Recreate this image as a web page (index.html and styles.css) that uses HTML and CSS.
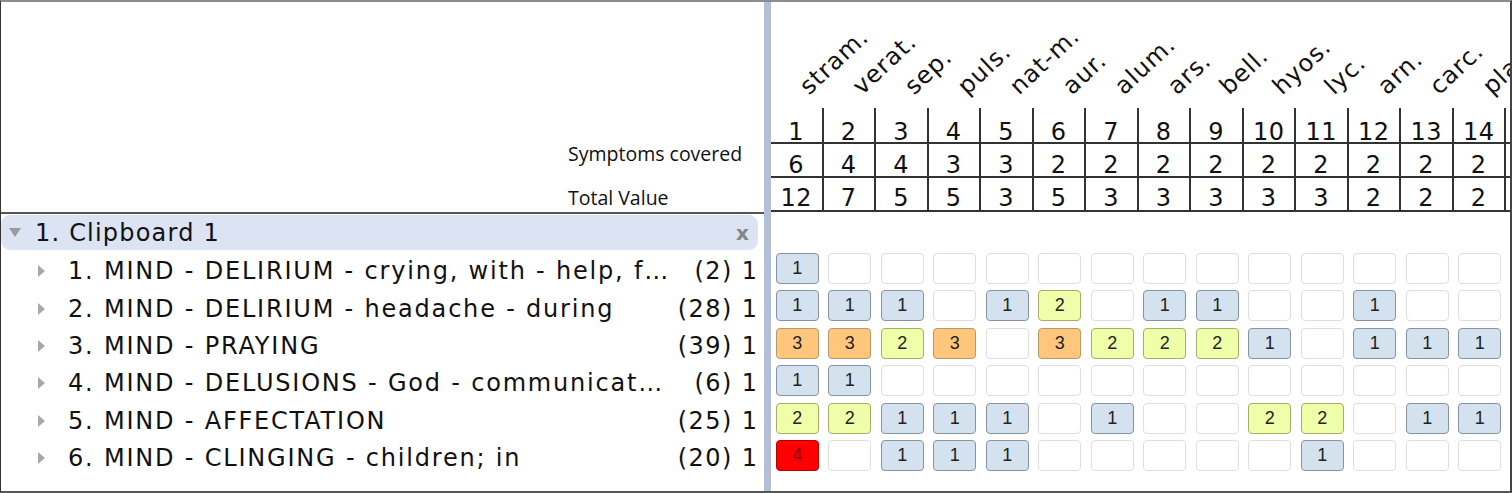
FILE: index.html
```html
<!DOCTYPE html>
<html>
<head>
<meta charset="utf-8">
<link rel="stylesheet" href="styles.css">
</head>
<body>
<div class="frame">
  <div class="left">
    <div class="lhead">
      <div class="hl">Symptoms covered</div>
      <div class="hl">Total Value</div>
    </div>
    <div class="tree">
      <div class="clip"><span class="tri-down"></span><span class="clip-name">1. Clipboard 1</span><span class="close">x</span></div>
      <div class="row"><span class="tri-right"></span><span class="rtxt">1. MIND - DELIRIUM - crying, with - help, f…</span><span class="cnt">(2) 1</span></div>
      <div class="row"><span class="tri-right"></span><span class="rtxt">2. MIND - DELIRIUM - headache - during</span><span class="cnt">(28) 1</span></div>
      <div class="row"><span class="tri-right"></span><span class="rtxt">3. MIND - PRAYING</span><span class="cnt">(39) 1</span></div>
      <div class="row"><span class="tri-right"></span><span class="rtxt">4. MIND - DELUSIONS - God - communicat…</span><span class="cnt">(6) 1</span></div>
      <div class="row"><span class="tri-right"></span><span class="rtxt">5. MIND - AFFECTATION</span><span class="cnt">(25) 1</span></div>
      <div class="row"><span class="tri-right"></span><span class="rtxt">6. MIND - CLINGING - children; in</span><span class="cnt">(20) 1</span></div>
    </div>
  </div>
  <div class="divider"></div>
  <div class="right">
    <div class="rhead">
      <div class="hcol"><div class="lab"><span>stram.</span></div><div class="hn hn-a">1</div><div class="hn hn-b">6</div><div class="hn hn-c">12</div></div>
      <div class="hcol"><div class="lab"><span>verat.</span></div><div class="hn hn-a">2</div><div class="hn hn-b">4</div><div class="hn hn-c">7</div></div>
      <div class="hcol"><div class="lab"><span>sep.</span></div><div class="hn hn-a">3</div><div class="hn hn-b">4</div><div class="hn hn-c">5</div></div>
      <div class="hcol"><div class="lab"><span>puls.</span></div><div class="hn hn-a">4</div><div class="hn hn-b">3</div><div class="hn hn-c">5</div></div>
      <div class="hcol"><div class="lab"><span>nat-m.</span></div><div class="hn hn-a">5</div><div class="hn hn-b">3</div><div class="hn hn-c">3</div></div>
      <div class="hcol"><div class="lab"><span>aur.</span></div><div class="hn hn-a">6</div><div class="hn hn-b">2</div><div class="hn hn-c">5</div></div>
      <div class="hcol"><div class="lab"><span>alum.</span></div><div class="hn hn-a">7</div><div class="hn hn-b">2</div><div class="hn hn-c">3</div></div>
      <div class="hcol"><div class="lab"><span>ars.</span></div><div class="hn hn-a">8</div><div class="hn hn-b">2</div><div class="hn hn-c">3</div></div>
      <div class="hcol"><div class="lab"><span>bell.</span></div><div class="hn hn-a">9</div><div class="hn hn-b">2</div><div class="hn hn-c">3</div></div>
      <div class="hcol"><div class="lab"><span>hyos.</span></div><div class="hn hn-a">10</div><div class="hn hn-b">2</div><div class="hn hn-c">3</div></div>
      <div class="hcol"><div class="lab"><span>lyc.</span></div><div class="hn hn-a">11</div><div class="hn hn-b">2</div><div class="hn hn-c">3</div></div>
      <div class="hcol"><div class="lab"><span>arn.</span></div><div class="hn hn-a">12</div><div class="hn hn-b">2</div><div class="hn hn-c">2</div></div>
      <div class="hcol"><div class="lab"><span>carc.</span></div><div class="hn hn-a">13</div><div class="hn hn-b">2</div><div class="hn hn-c">2</div></div>
      <div class="hcol"><div class="lab"><span>plat.</span></div><div class="hn hn-a">14</div><div class="hn hn-b">2</div><div class="hn hn-c">2</div></div>
      <div class="hcol"><div class="lab"></div><div class="hn hn-a"></div><div class="hn hn-b"></div><div class="hn hn-c"></div></div>
    </div>
    <div class="grid">
      <div class="cell b">1</div><div class="cell"></div><div class="cell"></div><div class="cell"></div><div class="cell"></div><div class="cell"></div><div class="cell"></div><div class="cell"></div><div class="cell"></div><div class="cell"></div><div class="cell"></div><div class="cell"></div><div class="cell"></div><div class="cell"></div><div class="cell"></div>

      <div class="cell b">1</div><div class="cell b">1</div><div class="cell b">1</div><div class="cell"></div><div class="cell b">1</div><div class="cell y">2</div><div class="cell"></div><div class="cell b">1</div><div class="cell b">1</div><div class="cell"></div><div class="cell"></div><div class="cell b">1</div><div class="cell"></div><div class="cell"></div><div class="cell"></div>

      <div class="cell o">3</div><div class="cell o">3</div><div class="cell y">2</div><div class="cell o">3</div><div class="cell"></div><div class="cell o">3</div><div class="cell y">2</div><div class="cell y">2</div><div class="cell y">2</div><div class="cell b">1</div><div class="cell"></div><div class="cell b">1</div><div class="cell b">1</div><div class="cell b">1</div><div class="cell b"></div>

      <div class="cell b">1</div><div class="cell b">1</div><div class="cell"></div><div class="cell"></div><div class="cell"></div><div class="cell"></div><div class="cell"></div><div class="cell"></div><div class="cell"></div><div class="cell"></div><div class="cell"></div><div class="cell"></div><div class="cell"></div><div class="cell"></div><div class="cell"></div>

      <div class="cell y">2</div><div class="cell y">2</div><div class="cell b">1</div><div class="cell b">1</div><div class="cell b">1</div><div class="cell"></div><div class="cell b">1</div><div class="cell"></div><div class="cell"></div><div class="cell y">2</div><div class="cell y">2</div><div class="cell"></div><div class="cell b">1</div><div class="cell b">1</div><div class="cell b"></div>

      <div class="cell r">4</div><div class="cell"></div><div class="cell b">1</div><div class="cell b">1</div><div class="cell b">1</div><div class="cell"></div><div class="cell"></div><div class="cell"></div><div class="cell"></div><div class="cell"></div><div class="cell b">1</div><div class="cell"></div><div class="cell"></div><div class="cell"></div><div class="cell"></div>
    </div>
  </div>
</div>
</body>
</html>
```
FILE: styles.css
```css
html, body {
  margin: 0;
  padding: 0;
  background: #fff;
}

.frame {
  width: 1512px;
  height: 493px;
  box-sizing: border-box;
  border-top: 2px solid #8c8c8c;
  border-left: 1px solid #333;
  border-bottom: 2px solid #555;
  border-right: 2px solid #444;
  display: flex;
  overflow: hidden;
  background: #fff;
  color: #111;
}

/* ---------- left pane ---------- */
.left {
  flex: 0 0 763px;
  width: 763px;
  display: flex;
  flex-direction: column;
}

.lhead {
  height: 212px;
  box-sizing: border-box;
  border-bottom: 2px solid #555;
  display: flex;
  flex-direction: column;
  justify-content: flex-end;
  gap: 22px;
  padding: 0 0 3px 567px;
  font-family: "Open Sans", sans-serif;
  font-size: 19.5px;
  line-height: 22px;
  color: #111;
}

.tree {
  font-family: "DejaVu Sans", sans-serif;
  font-size: 24px;
  letter-spacing: 1.8px;
  color: #111;
}

.clip {
  margin-top: 1px;
  height: 35px;
  width: 757px;
  background: #dce3f3;
  border-radius: 9px;
  display: flex;
  align-items: center;
}

.tri-down {
  width: 0;
  height: 0;
  margin-left: 8px;
  margin-right: 14px;
  border-left: 6px solid transparent;
  border-right: 6px solid transparent;
  border-top: 9px solid #9c9c9c;
}

.clip-name {
  flex: 1;
  white-space: nowrap;
  letter-spacing: 1.2px;
}

.close {
  color: #858585;
  font-weight: bold;
  font-size: 20px;
  letter-spacing: 0;
  margin-right: 9px;
}

.row {
  height: 37.4px;
  box-sizing: border-box;
  padding-top: 5px;
  display: flex;
  align-items: center;
  padding-right: 7px;
}

.tri-right {
  width: 0;
  height: 0;
  margin-left: 37px;
  margin-right: 23px;
  border-top: 6px solid transparent;
  border-bottom: 6px solid transparent;
  border-left: 7px solid #a8a8a8;
}

.rtxt {
  flex: 1;
  white-space: nowrap;
}

.cnt {
  white-space: nowrap;
  letter-spacing: 1.4px;
  margin-right: -1.4px;
}

/* ---------- divider ---------- */
.divider {
  flex: 0 0 7px;
  background: #b3bed9;
}

/* ---------- right pane ---------- */
.right {
  flex: 0 0 739px;
  width: 739px;
  overflow: hidden;
  display: flex;
  flex-direction: column;
}

.rhead {
  display: flex;
  height: 212px;
  flex: 0 0 212px;
}

.hcol {
  flex: 0 0 52.5px;
  width: 52.5px;
  display: flex;
  flex-direction: column;
}

.lab {
  height: 106px;
  box-sizing: border-box;
  display: flex;
  align-items: flex-end;
  padding-left: 40px;
  padding-bottom: 10px;
  font-family: "DejaVu Sans", sans-serif;
  font-size: 24px;
  letter-spacing: 1px;
  color: #111;
}

.lab span {
  display: block;
  white-space: nowrap;
  line-height: 22px;
  transform: rotate(-43deg);
  transform-origin: 0 100%;
}

.hn {
  box-sizing: border-box;
  border-right: 2px solid #333;
  border-bottom: 2px solid #333;
  display: flex;
  align-items: flex-end;
  justify-content: center;
  font-family: "DejaVu Sans", sans-serif;
  font-size: 24px;
  letter-spacing: 0.5px;
  line-height: 19px;
  color: #111;
}

.hn-a { height: 36px; }
.hn-b { height: 34px; padding-bottom: 1px; }
.hn-c { height: 34px; padding-bottom: 2px; }

.grid {
  padding-top: 35.8px;
  display: grid;
  grid-template-columns: repeat(15, 52.5px);
  grid-auto-rows: 37.4px;
}

.cell {
  width: 43px;
  height: 31px;
  box-sizing: border-box;
  justify-self: center;
  align-self: center;
  border: 1.5px solid #dedede;
  border-radius: 4px;
  background: #fff;
  display: flex;
  align-items: center;
  justify-content: center;
  font-family: "Liberation Sans", sans-serif;
  font-size: 18px;
  color: #222;
}

.cell.b {
  background: #d3e2ee;
  border-color: #86949f;
}

.cell.y {
  background: #efffa9;
  border-color: #a6ad6a;
}

.cell.o {
  background: #ffc67c;
  border-color: #b7986a;
}

.cell.r {
  background: #ff0000;
  border-color: #b00000;
  color: #7a0000;
}
```
